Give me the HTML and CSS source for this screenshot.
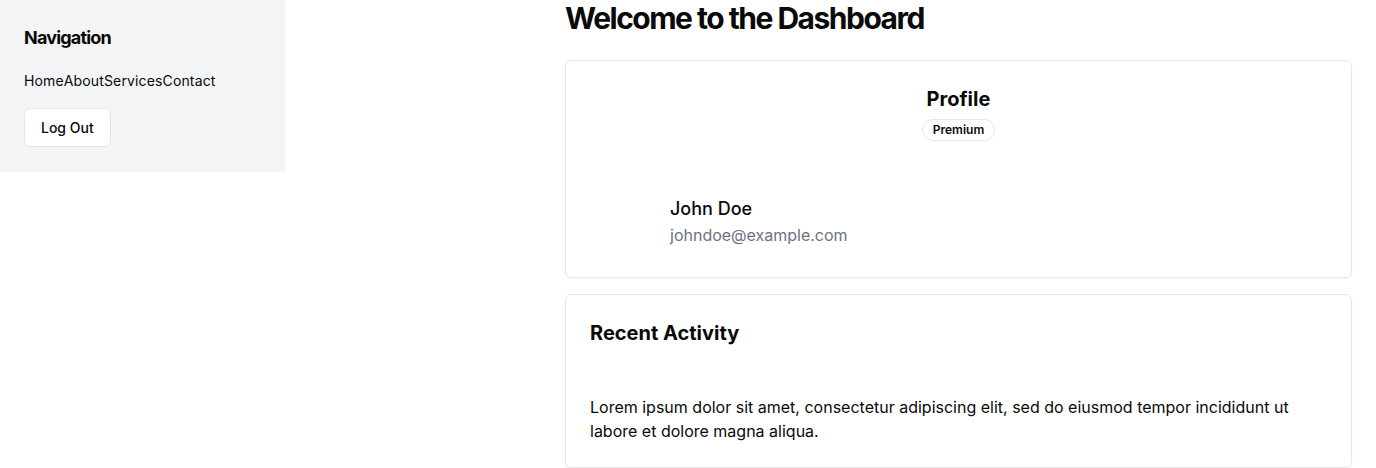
FILE: index.html
```html
<!DOCTYPE html>
<html lang="en">
<head>
<meta charset="utf-8">
<title>Dashboard</title>
<link rel="stylesheet" href="styles.css">
</head>
<body>
<div class="layout">
  <aside class="sidebar">
    <h2 class="nav-title">Navigation</h2>
    <nav class="nav-links">
      <a href="#">Home</a><a href="#">About</a><a href="#">Services</a><a href="#">Contact</a>
    </nav>
    <button class="btn">Log Out</button>
  </aside>
  <main class="main">
    <div class="content">
      <h1 class="page-title">Welcome to the Dashboard</h1>
      <section class="card">
        <div class="card-header center">
          <h3 class="card-title">Profile</h3>
          <span class="badge">Premium</span>
        </div>
        <div class="card-body">
          <div class="profile-row">
            <div class="avatar"></div>
            <div class="profile-info">
              <div class="name">John Doe</div>
              <div class="email">johndoe@example.com</div>
            </div>
          </div>
        </div>
      </section>
      <section class="card">
        <div class="card-header">
          <h3 class="card-title">Recent Activity</h3>
        </div>
        <div class="card-body">
          <p class="text">Lorem ipsum dolor sit amet, consectetur adipiscing elit, sed do eiusmod tempor incididunt ut labore et dolore magna aliqua.</p>
        </div>
      </section>
    </div>
  </main>
</div>
</body>
</html>
```

FILE: styles.css
```css
* { box-sizing: border-box; }
html, body { margin: 0; padding: 0; }
body {
  font-family: Inter, "Liberation Sans", sans-serif;
  color: #0a0a0a;
  background: #ffffff;
}
.layout {
  display: flex;
  align-items: flex-start;
}
.sidebar {
  width: 285px;
  flex: none;
  background: #f3f4f6;
  padding: 24px 24px 25px;
}
.nav-title {
  margin: 0 0 16px;
  font-size: 18px;
  line-height: 28px;
  font-weight: 700;
  letter-spacing: -0.045em;
}
.nav-links {
  display: flex;
  font-size: 14px;
  line-height: 24px;
  margin-bottom: 16px;
  padding-top: 1px;
  letter-spacing: 0.01em;
}
.nav-links a {
  color: #0a0a0a;
  text-decoration: none;
}
.btn {
  display: block;
  font-family: inherit;
  font-size: 14px;
  font-weight: 500;
  color: #0a0a0a;
  background: #ffffff;
  border: 1px solid #e5e7eb;
  border-radius: 6px;
  height: 39px;
  padding: 0 16px;
  margin-top: -1px;
}
.main {
  flex: 1;
  display: flex;
  justify-content: flex-end;
  padding-right: 24px;
}
.content {
  width: 787px;
}
.page-title {
  margin: 0 0 24px;
  font-size: 30px;
  line-height: 36px;
  font-weight: 700;
  letter-spacing: -0.05em;
}
.card {
  border: 1px solid #e5e7eb;
  border-radius: 6px;
  background: #fff;
  margin-bottom: 16px;
  box-shadow: 0 1px 2px rgba(0,0,0,0.04);
}
.card-header {
  padding: 24px;
  display: flex;
  flex-direction: column;
  gap: 6px;
}
.card-header.center {
  align-items: center;
}
.card-title {
  margin: 0;
  font-size: 20px;
  line-height: 28px;
  font-weight: 700;
}
.badge {
  display: inline-flex;
  align-items: center;
  padding: 2px 10px;
  line-height: 16px;
  border: 1px solid #e5e7eb;
  border-radius: 999px;
  font-size: 12px;
  font-weight: 600;
}
.card-body {
  padding: 24px;
}
.profile-row {
  display: flex;
  align-items: center;
  gap: 16px;
}
.avatar {
  width: 64px;
  height: 64px;
  flex: none;
}
.name {
  font-size: 18px;
  line-height: 28px;
  font-weight: 500;
}
.email {
  font-size: 16px;
  line-height: 24px;
  color: #6b7280;
}
.text {
  margin: 0;
  font-size: 16px;
  line-height: 24px;
}
```
